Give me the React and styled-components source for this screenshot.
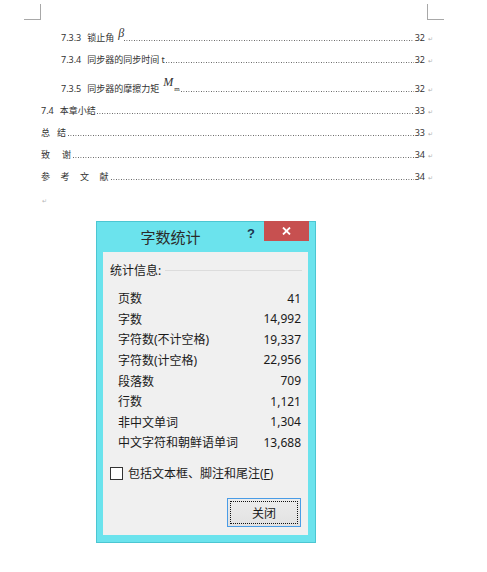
import React from 'react';
import styled, { createGlobalStyle } from 'styled-components';

const Global = createGlobalStyle`
  html, body { margin: 0; padding: 0; background: #fff; }
  body {
    width: 487px;
    height: 572px;
    overflow: hidden;
    font-family: "Noto Sans", "Noto Sans CJK SC", sans-serif;
  }
`;

const Page = styled.div`
  position: relative;
  width: 487px;
  height: 572px;
  box-sizing: border-box;
  padding-top: 4px;
  background: #fff;
`;

/* page margin corner marks */
const Margins = styled.div`
  display: flex;
  justify-content: space-between;
  padding: 0 43px 0 24px;
`;

const CropMark = styled.div`
  width: 16px;
  height: 15px;
  border-bottom: 1px solid #a8a8a8;
  ${(p) => (p.$side === 'left' ? 'border-right: 1px solid #a8a8a8;' : 'border-left: 1px solid #a8a8a8;')}
`;

const Toc = styled.div`
  margin: 6px 0 0 41px;
  width: 392px;
  display: flex;
  flex-direction: column;
  font-size: 9px;
  color: #333;
`;

const Entry = styled.div`
  display: flex;
  align-items: center;
  height: 22px;
  padding-top: ${(p) => p.$lift || 0}px;
  padding-left: ${(p) => p.$indent || 0}px;
`;

const Num = styled.span`
  margin-right: 6px;
  white-space: pre;
`;

const Label = styled.span`
  white-space: pre;
  letter-spacing: ${(p) => p.$spread || 0}px;
  margin-right: ${(p) => (p.$spread ? 2 - p.$spread : 1)}px;
`;

/* math symbols sit above the text line; bottom margin lifts them in the centred row */
const Greek = styled.span`
  font-family: "Liberation Serif", serif;
  font-style: italic;
  font-size: 12px;
  line-height: 12px;
  margin: 0 0 ${(p) => (p.$raise || 4) * 2}px 3px;
  color: #333;
`;

const Sub = styled.span`
  font-family: "Liberation Serif", serif;
  font-size: 7px;
  margin: 2px 1px 0 1px;
`;

const Leader = styled.span`
  flex: 1;
  height: 1px;
  margin-top: 6px;
  background-image: linear-gradient(to right, #5a5a5a 0 1px, transparent 1px);
  background-size: 2.5px 1px;
  background-repeat: repeat-x;
`;

const PageNo = styled.span`
  width: 11px;
  text-align: right;
`;

const ParaMark = styled.span`
  font-size: 6px;
  color: #b0b0b0;
  margin-left: 3px;
  width: 5px;
  margin-top: 3px;
`;

const EndMark = styled.div`
  height: 18px;
  display: flex;
  align-items: flex-end;
  font-size: 6px;
  color: #b5b5b5;
  padding-left: 1px;
`;

/* Word count window */
const Window = styled.div`
  position: absolute;
  left: 96px;
  top: 221px;
  width: 220px;
  height: 322px;
  box-sizing: border-box;
  border: 1px solid #4cc6d2;
  background: #6be3ed;
  padding: 0 7px 7px 6px;
  display: flex;
  flex-direction: column;
`;

const TitleBar = styled.div`
  height: 30px;
  display: flex;
  align-items: flex-start;
`;

const Title = styled.div`
  flex: 1;
  text-align: center;
  font-family: "Noto Sans CJK SC", sans-serif;
  font-size: 15px;
  line-height: 30px;
  color: #2b2b2b;
`;

const HelpButton = styled.div`
  width: 26px;
  text-align: center;
  font-family: "Liberation Sans", sans-serif;
  font-weight: bold;
  font-size: 13px;
  line-height: 16px;
  padding-top: 4px;
  color: #1d3550;
`;

const CloseButton = styled.div`
  width: 45px;
  height: 20px;
  margin-top: -1px;
  margin-right: -1px;
  background: #c75050;
  color: #fff;
  display: flex;
  align-items: center;
  justify-content: center;
`;

const Client = styled.div`
  flex: 1;
  background: #f0f0f0;
  display: flex;
  flex-direction: column;
  font-size: 12px;
  color: #1a1a1a;
`;

const GroupHead = styled.div`
  display: flex;
  align-items: center;
  height: 18px;
  margin-top: 9px;
  padding-left: 7px;
  padding-right: 6px;
`;

const GroupLine = styled.div`
  flex: 1;
  height: 1px;
  margin-left: 4px;
  margin-top: 1px;
  background: #dcdcdc;
`;

const Stats = styled.div`
  display: flex;
  flex-direction: column;
  margin-top: 8.7px;
  padding: 0 7px 0 15px;
`;

const StatRow = styled.div`
  display: flex;
  justify-content: space-between;
  align-items: center;
  height: 20.65px;
`;

const CheckRow = styled.label`
  display: flex;
  align-items: center;
  height: 20px;
  margin-top: 10.6px;
  padding-left: 7px;
  gap: 5px;
`;

const Box = styled.span`
  width: 11px;
  height: 11px;
  border: 1px solid #333;
  background: #fff;
`;

const Accel = styled.span`
  text-decoration: underline;
`;

const Footer = styled.div`
  display: flex;
  justify-content: flex-end;
  padding: 15px 7px 0 0;
`;

const Button = styled.button`
  width: 74px;
  height: 29px;
  box-sizing: border-box;
  border: 1px solid #4a9ce6;
  background: linear-gradient(#ececec, #e2e2e2);
  font-family: "Noto Sans CJK SC", sans-serif;
  font-size: 12px;
  color: #1a1a1a;
  outline: 1px dotted #111;
  outline-offset: -4px;
  padding: 0;
`;

const stats = [
  ['页数', '41'],
  ['字数', '14,992'],
  ['字符数(不计空格)', '19,337'],
  ['字符数(计空格)', '22,956'],
  ['段落数', '709'],
  ['行数', '1,121'],
  ['非中文单词', '1,304'],
  ['中文字符和朝鲜语单词', '13,688'],
];

function TocEntry({ num, label, spread, indent, lift, page, children }) {
  return (
    <Entry $indent={indent} $lift={lift}>
      {num && <Num>{num}</Num>}
      <Label $spread={spread}>{label}</Label>
      {children}
      <Leader />
      <PageNo>{page}</PageNo>
      <ParaMark>↵</ParaMark>
    </Entry>
  );
}

export default function App() {
  return (
    <Page>
      <Global />
      <Margins>
        <CropMark $side="left" />
        <CropMark $side="right" />
      </Margins>
      <Toc>
        <TocEntry num="7.3.3" label="锁止角" indent={20} page="32">
          <Greek $raise={4}>β</Greek>
        </TocEntry>
        <TocEntry num="7.3.4" label="同步器的同步时间 t" indent={20} page="32" />
        <TocEntry num="7.3.5" label="同步器的摩擦力矩" indent={20} lift={7} page="32">
          <Greek $raise={6}>M</Greek>
          <Sub>m</Sub>
        </TocEntry>
        <TocEntry num="7.4" label="本章小结" page="33" />
        <TocEntry label="总结" spread={7} page="33" />
        <TocEntry label="致谢" spread={12} page="34" />
        <TocEntry label="参考文献" spread={10.5} page="34" />
        <EndMark>↵</EndMark>
      </Toc>

      <Window>
        <TitleBar>
          <Title>字数统计</Title>
          <HelpButton>?</HelpButton>
          <CloseButton>
            <svg width="9" height="8" viewBox="0 0 9 8">
              <path d="M1 0.5 L8 7.5 M8 0.5 L1 7.5" stroke="#fff" strokeWidth="1.8" />
            </svg>
          </CloseButton>
        </TitleBar>
        <Client>
          <GroupHead>
            统计信息:
            <GroupLine />
          </GroupHead>
          <Stats>
            {stats.map(([k, v]) => (
              <StatRow key={k}>
                <span>{k}</span>
                <span>{v}</span>
              </StatRow>
            ))}
          </Stats>
          <CheckRow>
            <Box />
            <span>
              包括文本框、脚注和尾注(<Accel>F</Accel>)
            </span>
          </CheckRow>
          <Footer>
            <Button>关闭</Button>
          </Footer>
        </Client>
      </Window>
    </Page>
  );
}
